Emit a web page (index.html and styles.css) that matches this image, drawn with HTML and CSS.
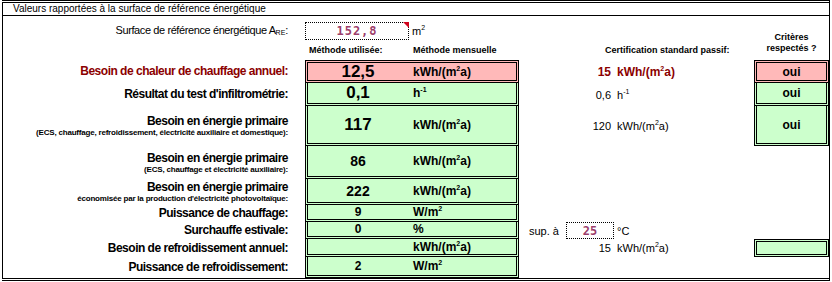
FILE: index.html
```html
<!DOCTYPE html>
<html lang="fr">
<head>
  <meta charset="UTF-8">
  <title>Valeurs rapportées à la surface de référence énergétique</title>
  <link rel="stylesheet" href="styles.css">
</head>
<body>
  <div class="sheet">
    <div class="title">Valeurs rapportées à la surface de référence énergétique</div>

    <div class="grid">
      <!-- surface -->
      <div class="label plain">Surface de référence énergétique A<span class="sub">RE</span>:</div>
      <div class="area">
        <span class="input area-input">152,8<i class="note"></i></span>
        <span class="plain-unit">m<sup>2</sup></span>
      </div>
      <div class="crit-head">Critères<br>respectés ?</div>

      <!-- headers -->
      <div class="spacer"></div>
      <div class="head-box"><span class="head-val">Méthode utilisée:</span><span>Méthode mensuelle</span></div>
      <div class="head-cert">Certification standard passif:</div>

      <!-- chaleur -->
      <div class="label alert">Besoin de chaleur de chauffage annuel:</div>
      <div class="box first pink"><span class="val big">12,5</span><span class="unit">kWh/(m<sup>2</sup>a)</span></div>
      <div class="cert strong"><span class="num">15</span><span class="cu">kWh/(m<sup>2</sup>a)</span></div>
      <div class="box first pink crit">oui</div>

      <!-- infiltrometrie -->
      <div class="label">Résultat du test d'infiltrométrie:</div>
      <div class="box"><span class="val big">0,1</span><span class="unit">h<sup>-1</sup></span></div>
      <div class="cert"><span class="num">0,6</span><span class="cu">h<sup>-1</sup></span></div>
      <div class="box crit">oui</div>

      <!-- energie primaire -->
      <div class="label">Besoin en énergie primaire<small>(ECS, chauffage, refroidissement, électricité auxiliaire et domestique):</small></div>
      <div class="box"><span class="val big">117</span><span class="unit">kWh/(m<sup>2</sup>a)</span></div>
      <div class="cert"><span class="num">120</span><span class="cu">kWh/(m<sup>2</sup>a)</span></div>
      <div class="box crit">oui</div>

      <div class="label">Besoin en énergie primaire<small>(ECS, chauffage et électricité auxiliaire):</small></div>
      <div class="box"><span class="val mid">86</span><span class="unit">kWh/(m<sup>2</sup>a)</span></div>
      <div class="cert"></div>
      <div></div>

      <div class="label">Besoin en énergie primaire<small>économisée par la production d'électricité photovoltaïque:</small></div>
      <div class="box"><span class="val mid">222</span><span class="unit">kWh/(m<sup>2</sup>a)</span></div>
      <div class="cert"></div>
      <div></div>

      <!-- puissance -->
      <div class="label">Puissance de chauffage:</div>
      <div class="box"><span class="val">9</span><span class="unit">W/m<sup>2</sup></span></div>
      <div class="cert"></div>
      <div></div>

      <div class="label">Surchauffe estivale:</div>
      <div class="box"><span class="val">0</span><span class="unit">%</span></div>
      <div class="cert"><span class="sup-a">sup. à</span><span class="input temp">25</span><span class="deg">°C</span></div>
      <div></div>

      <div class="label">Besoin de refroidissement annuel:</div>
      <div class="box"><span class="val"></span><span class="unit">kWh/(m<sup>2</sup>a)</span></div>
      <div class="cert"><span class="num">15</span><span class="cu">kWh/(m<sup>2</sup>a)</span></div>
      <div class="box first crit"></div>

      <div class="label">Puissance de refroidissement:</div>
      <div class="box"><span class="val">2</span><span class="unit">W/m<sup>2</sup></span></div>
      <div class="cert"></div>
      <div></div>
    </div>
  </div>
</body>
</html>
```

FILE: styles.css
```css
* {
  margin: 0;
  padding: 0;
  box-sizing: border-box;
}

body {
  background: #fff;
  font-family: "Liberation Sans", Arial, sans-serif;
  color: #000;
}

/* outer frame */
.sheet {
  margin-left: 2px;
  width: 828px;
  border: 1px solid #000;
  border-top: 3px double #000;
  border-bottom: 3px double #000;
}

.title {
  height: 13px;
  border-bottom: 1px solid #000;
  padding-left: 10px;
  font-size: 10px;
  line-height: 12px;
}

.grid {
  display: grid;
  grid-template-columns: 302px 214px 235px 75px;
  grid-template-rows: 24px 20px 23px 23px 40px 33px 26px 17px 17px 18px 21px;
}

.spacer {
  grid-column: 1;
  grid-row: 2;
}

/* labels */
.label {
  grid-column: 1;
  display: flex;
  flex-direction: column;
  justify-content: center;
  align-items: flex-end;
  padding-right: 17px;
  font-size: 12px;
  font-weight: bold;
  letter-spacing: -0.5px;
  line-height: 13px;
  text-align: right;
}

.label small {
  display: block;
  font-size: 8px;
  letter-spacing: -0.2px;
  line-height: 9px;
}

.label.plain {
  display: block;
  font-weight: normal;
  font-size: 11px;
  letter-spacing: -0.4px;
  padding-top: 8px;
}

.label.alert {
  color: #8b0000;
}

.sub {
  font-size: 7px;
  letter-spacing: 0;
  vertical-align: -1px;
}

sup {
  font-size: 7px;
  vertical-align: 5px;
  line-height: 0;
}

/* surface row */
.area {
  grid-column: 2 / 4;
  display: flex;
  align-items: center;
  padding-top: 5px;
}

.input {
  position: relative;
  display: flex;
  align-items: center;
  justify-content: center;
  border: 1px dotted #000;
  font-family: "DejaVu Sans Mono", monospace;
  font-weight: bold;
  font-size: 12px;
  color: #9c3d6b;
  background: #fff;
}

.area-input {
  width: 104px;
  height: 18px;
  letter-spacing: 1px;
}

.note {
  position: absolute;
  top: -1px;
  right: -1px;
  border-top: 6px solid #d0021b;
  border-left: 6px solid transparent;
}

.plain-unit {
  margin-left: 3px;
  font-size: 11px;
}

.crit-head {
  grid-column: 4;
  grid-row: 1 / 3;
  align-self: end;
  padding-bottom: 6px;
  text-align: center;
  font-size: 9px;
  font-weight: bold;
  line-height: 11px;
}

.head-box {
  grid-column: 2;
  grid-row: 2;
  display: flex;
  align-items: center;
  padding-left: 4px;
  font-size: 9px;
  font-weight: bold;
}

.head-val {
  width: 104px;
}

.head-cert {
  grid-column: 3;
  grid-row: 2;
  display: flex;
  align-items: center;
  padding-left: 86px;
  font-size: 9px;
  font-weight: bold;
}

/* boxes */
.box {
  display: flex;
  align-items: center;
  background: #ccffcc;
  border: 3px double #000;
  border-top: none;
  font-weight: bold;
  font-size: 12px;
}

.box.first {
  border-top: 3px double #000;
}

.box.pink {
  background: #ffb9b9;
}

.val {
  width: 100px;
  text-align: center;
  font-size: 12px;
}

.val.big {
  font-size: 17px;
}

.val.mid {
  font-size: 14px;
}

.unit {
  padding-left: 5px;
}

.crit {
  justify-content: center;
}

/* certification */
.cert {
  display: flex;
  align-items: center;
  font-size: 11px;
}

.cert.strong {
  font-size: 12px;
  font-weight: bold;
  color: #8b0000;
}

.num {
  width: 92px;
  text-align: right;
}

.cu {
  margin-left: 6px;
}

.sup-a {
  margin-left: 10px;
  width: 37px;
}

.temp {
  width: 48px;
  height: 100%;
}

.deg {
  margin-left: 3px;
}
```
